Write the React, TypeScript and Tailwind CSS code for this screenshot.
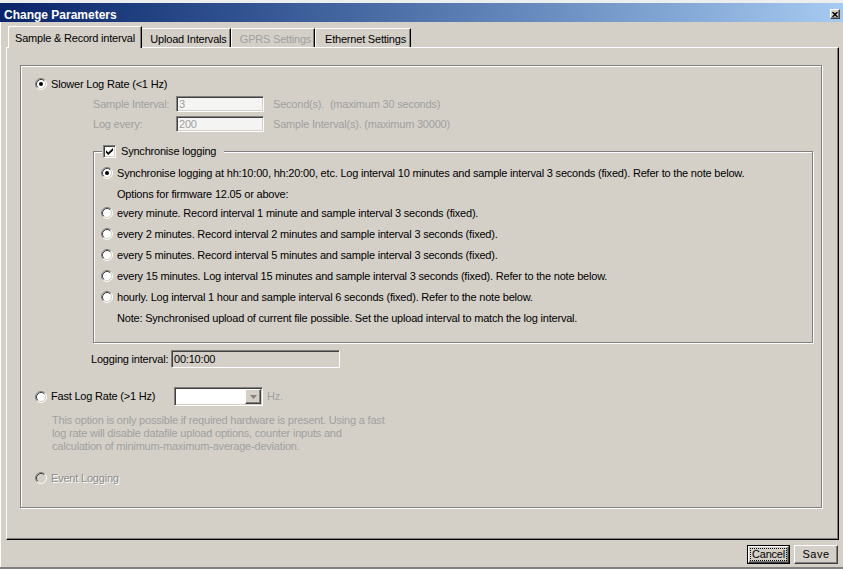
import React from "react";

const sunken =
  "border border-t-[#808080] border-l-[#808080] border-b-white border-r-white shadow-[inset_1px_1px_0_#404040,inset_-1px_-1px_0_#d4d0c8]";
const raised =
  "border border-t-white border-l-white border-b-[#404040] border-r-[#404040] shadow-[inset_-1px_-1px_0_#808080]";
const etched = "border border-[#808080] shadow-[inset_1px_1px_0_#fff,1px_1px_0_#fff]";

function Radio({ checked = false, disabled = false }: { checked?: boolean; disabled?: boolean }) {
  return (
    <svg width="12" height="12" viewBox="0 0 12 12" className="shrink-0">
      <circle cx="6" cy="6" r="4.5" fill={disabled ? "#d4d0c8" : "#fff"} />
      <path d="M2.11 9.89 A5.5 5.5 0 0 1 9.89 2.11" fill="none" stroke="#808080" />
      <path d="M9.89 2.11 A5.5 5.5 0 0 1 2.11 9.89" fill="none" stroke="#fff" />
      <path d="M2.82 9.18 A4.5 4.5 0 0 1 9.18 2.82" fill="none" stroke="#404040" />
      <path d="M9.18 2.82 A4.5 4.5 0 0 1 2.82 9.18" fill="none" stroke="#d4d0c8" />
      {checked && <circle cx="6" cy="6" r="2" fill="#000" />}
    </svg>
  );
}

function Checkbox() {
  return (
    <span className={`flex items-center justify-center w-[13px] h-[13px] bg-white shrink-0 ${sunken}`}>
      <svg width="7" height="7" viewBox="0 0 7 7">
        <path d="M0 2.2 L2.3 4.5 L7 0 L7 2.6 L2.3 7 L0 4.8 Z" fill="#000" />
      </svg>
    </span>
  );
}

function RadioRow({ checked = false, children }: { checked?: boolean; children: React.ReactNode }) {
  return (
    <div className="h-[16px] pl-[7px] flex items-center gap-[4px] whitespace-nowrap">
      <Radio checked={checked} />
      <span>{children}</span>
    </div>
  );
}

export default function App() {
  return (
    <div className="w-[843px] h-[569px] bg-[#d4d0c8] font-['Liberation_Sans',Arial,sans-serif] text-[11px] tracking-[-0.2px] text-black overflow-hidden flex flex-col border-b-2 border-b-[#808080]">
      <div className="h-[3px] bg-[#eeeeee] shrink-0" />
      {/* Title bar */}
      <div className="h-[19px] shrink-0 bg-linear-to-r from-[#0a246a] to-[#a6caf0] flex justify-between">
        <div className="pl-[4px] pt-[5px] leading-[14px] text-[12px] tracking-normal font-bold text-white">Change Parameters</div>
        <div className={`mt-[6px] mr-[3px] w-[10px] h-[10px] bg-[#d4d0c8] flex items-center justify-center ${raised}`}>
          <svg width="6" height="5" viewBox="0 0 6 5">
            <path d="M0.5 0 L5.5 5 M5.5 0 L0.5 5" stroke="#000" strokeWidth="1.4" />
          </svg>
        </div>
      </div>

      <div className="flex-1 flex flex-col shadow-[inset_1px_0_0_#fff]">
        {/* Tabs */}
        <div className="mt-[4px] ml-[8px] h-[21px] flex items-end">
          <div className="relative z-10 -mb-px h-[22px] w-[134px] bg-[#d4d0c8] border-l border-t border-l-white border-t-white border-r border-r-black shadow-[inset_-1px_0_0_#808080] pt-[3px] text-center leading-[16px] whitespace-nowrap">
            Sample &amp; Record interval
          </div>
          <div className="h-[19px] w-[89px] border-t border-t-white border-r border-r-black shadow-[inset_-1px_0_0_#808080] pt-[2px] pl-[5px] text-center leading-[16px] whitespace-nowrap">
            Upload Intervals
          </div>
          <div className="h-[19px] w-[84px] border-t border-l border-t-white border-l-white border-r border-r-black shadow-[inset_-1px_0_0_#808080] pt-[2px] pl-[5px] text-center leading-[16px] whitespace-nowrap text-[#a0a0a0]">
            GPRS Settings
          </div>
          <div className="h-[19px] w-[96px] border-t border-l border-t-white border-l-white border-r border-r-black shadow-[inset_-1px_0_0_#808080] pt-[2px] pl-[5px] text-center leading-[16px] whitespace-nowrap">
            Ethernet Settings
          </div>
        </div>

        {/* Panel */}
        <div className="ml-[6px] w-[833px] h-[493px] shrink-0 border-l border-t border-l-white border-t-white border-r border-b border-r-black border-b-black shadow-[inset_-1px_-1px_0_#808080]">
          <div className={`ml-[13px] mt-[17px] w-[802px] h-[443px] ${etched}`}>
            {/* Slower log rate */}
            <div className="mt-[10px] h-[16px] pl-[14px] flex items-center gap-[4px]">
              <Radio checked />
              <span>Slower Log Rate (&lt;1 Hz)</span>
            </div>
            <div className="mt-[4px] h-[16px] pl-[72px] flex items-center text-[#a0a0a0] whitespace-nowrap">
              <span className="w-[83px]">Sample Interval:</span>
              <div className={`w-[88px] h-[16px] bg-[#f4f4f2] pl-[2px] leading-[14px] ${sunken}`}>3</div>
              <span className="ml-[9px] whitespace-pre">Second(s).  (maximum 30 seconds)</span>
            </div>
            <div className="mt-[4px] h-[16px] pl-[72px] flex items-center text-[#a0a0a0] whitespace-nowrap">
              <span className="w-[83px]">Log every:</span>
              <div className={`w-[88px] h-[16px] bg-[#f4f4f2] pl-[2px] leading-[14px] ${sunken}`}>200</div>
              <span className="ml-[9px] whitespace-pre">Sample Interval(s). (maximum 30000)</span>
            </div>

            {/* Synchronise logging group */}
            <div className={`relative mt-[19px] ml-[72px] w-[720px] h-[192px] ${etched}`}>
              <div className="absolute top-[-7px] left-[8px] h-[13px] pl-[1px] pr-[8px] bg-[#d4d0c8] flex items-center gap-[5px] whitespace-nowrap">
                <Checkbox />
                <span>Synchronise logging</span>
              </div>
              <div className="mt-[13px]">
                <RadioRow checked>
                  Synchronise logging at hh:10:00, hh:20:00, etc. Log interval 10 minutes and sample interval 3 seconds (fixed). Refer to the note below.
                </RadioRow>
              </div>
              <div className="mt-[5px] h-[16px] pl-[23px] flex items-center">Options for firmware 12.05 or above:</div>
              <div className="mt-[3px] flex flex-col gap-[5px]">
                <RadioRow>every minute. Record interval 1 minute and sample interval 3 seconds (fixed).</RadioRow>
                <RadioRow>every 2 minutes. Record interval 2 minutes and sample interval 3 seconds (fixed).</RadioRow>
                <RadioRow>every 5 minutes. Record interval 5 minutes and sample interval 3 seconds (fixed).</RadioRow>
                <RadioRow>every 15 minutes. Log interval 15 minutes and sample interval 3 seconds (fixed). Refer to the note below.</RadioRow>
                <RadioRow>hourly. Log interval 1 hour and sample interval 6 seconds (fixed). Refer to the note below.</RadioRow>
              </div>
              <div className="mt-[5px] h-[16px] pl-[23px] flex items-center whitespace-nowrap">
                Note: Synchronised upload of current file possible. Set the upload interval to match the log interval.
              </div>
            </div>

            {/* Logging interval */}
            <div className="mt-[7px] h-[18px] pl-[70px] flex items-center whitespace-nowrap">
              <span className="w-[80px]">Logging interval:</span>
              <div className={`w-[169px] h-[18px] bg-[#d4d0c8] pl-[2px] leading-[16px] ${sunken}`}>00:10:00</div>
            </div>

            {/* Fast log rate */}
            <div className="mt-[19px] h-[19px] pl-[14px] flex items-center whitespace-nowrap">
              <Radio />
              <span className="ml-[4px] w-[123px]">Fast Log Rate (&gt;1 Hz)</span>
              <div className={`w-[89px] h-[19px] bg-white flex justify-end items-center pr-[1px] ${sunken}`}>
                <div className={`w-[16px] h-[15px] bg-[#d4d0c8] flex items-center justify-center ${raised}`}>
                  <svg width="7" height="4" viewBox="0 0 7 4">
                    <path d="M0 0 L7 0 L3.5 4 Z" fill="#808080" />
                  </svg>
                </div>
              </div>
              <span className="ml-[4px] text-[#a0a0a0]">Hz.</span>
            </div>
            <div className="mt-[8px] pl-[31px] leading-[13px] text-[#a0a0a0] whitespace-nowrap">
              This option is only possible if required hardware is present. Using a fast
              <br />
              log rate will disable datafile upload options, counter inputs and
              <br />
              calculation of minimum-maximum-average-deviation.
            </div>

            {/* Event logging */}
            <div className="mt-[17px] h-[16px] pl-[14px] flex items-center gap-[4px]">
              <Radio disabled />
              <span className="text-[#8c8c8c] [text-shadow:1px_1px_0_#fff]">Event Logging</span>
            </div>
          </div>
        </div>

        {/* Buttons */}
        <div className="mt-[5px] pr-[5px] flex justify-end gap-[4px]">
          <div className="w-[43px] h-[19px] border border-black">
            <div className={`w-full h-full flex items-center justify-center ${raised}`}>
              <span className="border border-dotted border-black px-[1px] leading-[11px]">Cancel</span>
            </div>
          </div>
          <div className={`w-[44px] h-[19px] flex items-center justify-center ${raised}`}>
            <span className="tracking-[0.5px]">Save</span>
          </div>
        </div>
      </div>
    </div>
  );
}
